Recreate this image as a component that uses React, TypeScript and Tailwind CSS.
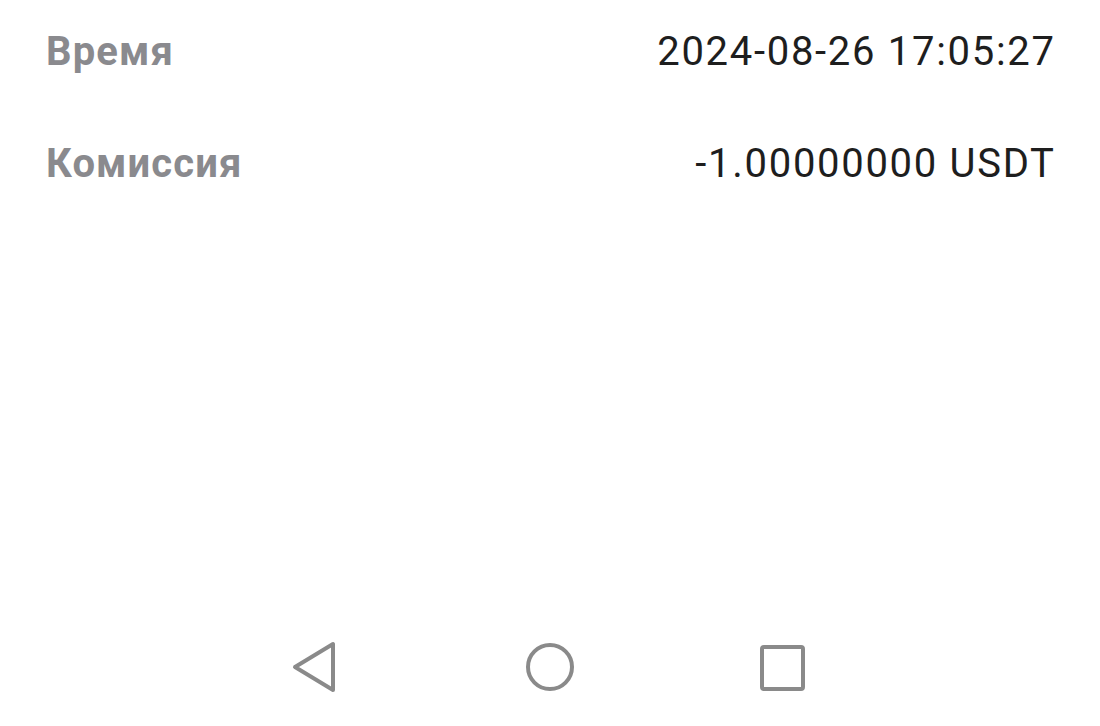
export default function App() {
  return (
    <div className="w-[1100px] h-[726px] bg-white flex flex-col" style={{ fontFamily: 'Roboto, "Noto Sans", sans-serif' }}>
      <div className="flex flex-col px-[46px] pt-[32px] gap-[72px]">
        <div className="flex items-center justify-between h-[40px]">
          <span className="text-[40px] leading-[40px] font-bold tracking-[1.1px] text-[#8a8a8e]">Время</span>
          <span className="text-[40px] leading-[40px] tracking-[1.7px] -mr-[1.7px] text-[#1e1e1e]">2024-08-26 17:05:27</span>
        </div>
        <div className="flex items-center justify-between h-[40px]">
          <span className="text-[40px] leading-[40px] font-bold tracking-[1.1px] text-[#8a8a8e]">Комиссия</span>
          <span className="text-[40px] leading-[40px] tracking-[1.7px] -mr-[1.7px] text-[#1e1e1e]">-1.00000000 USDT</span>
        </div>
      </div>
      <div className="mt-auto mb-[29px] flex pl-[284px]">
        <svg width="60" height="60" viewBox="0 0 60 60" fill="none" stroke="#8a8a8a" strokeWidth="4" strokeLinejoin="round">
          <path d="M11 30 L49 7 L49 53 Z" />
        </svg>
        <svg className="ml-[176px]" width="60" height="60" viewBox="0 0 60 60" fill="none" stroke="#8a8a8a" strokeWidth="4">
          <circle cx="30" cy="30" r="22" />
        </svg>
        <svg className="ml-[172px]" width="60" height="60" viewBox="0 0 60 60" fill="none" stroke="#8a8a8a" strokeWidth="4" strokeLinejoin="round">
          <rect x="10" y="10" width="41" height="42" rx="2" />
        </svg>
      </div>
    </div>
  );
}
